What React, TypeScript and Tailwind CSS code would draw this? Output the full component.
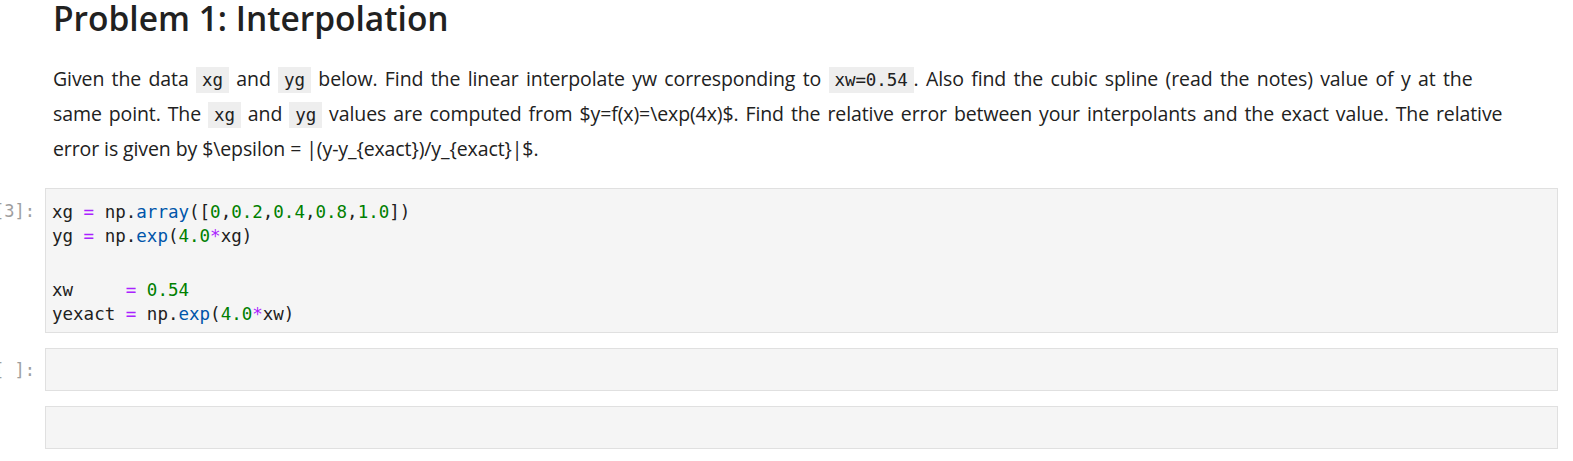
const mono = "font-['DejaVu_Sans_Mono',monospace]";

const Op = ({ children }: { children: React.ReactNode }) => (
  <span className="text-[#aa22ff]">{children}</span>
);
const Num = ({ children }: { children: React.ReactNode }) => (
  <span className="text-[#008000]">{children}</span>
);
const Fn = ({ children }: { children: React.ReactNode }) => (
  <span className="text-[#0055aa]">{children}</span>
);

const InlineCode = ({ children }: { children: React.ReactNode }) => (
  <code className={`${mono} bg-[#eeeeee] px-[6px] py-[3px] text-[17.5px] text-[#212121] [word-spacing:0]`}>{children}</code>
);

export default function App() {
  return (
    <div className="w-[1573px] h-[461px] bg-white overflow-hidden font-['Open_Sans','Noto_Sans',sans-serif] text-[#212121]">
      {/* Markdown cell */}
      <div className="pl-[53px]">
        <h2 className="text-[33.5px] font-semibold leading-[36px]">Problem 1: Interpolation</h2>
        <p className="mt-[26px] text-[19.5px] leading-[34px] tracking-[-0.1px] whitespace-nowrap">
          <span className="[word-spacing:2.4px]">
            Given the data <InlineCode>xg</InlineCode> and <InlineCode>yg</InlineCode> below. Find the linear interpolate yw corresponding to <InlineCode>xw=0.54</InlineCode>. Also find the cubic spline (read the notes) value of y at the
          </span>
          <br />
          <span className="[word-spacing:2px]">
            same point. The <InlineCode>xg</InlineCode> and <InlineCode>yg</InlineCode> values are computed from $y=f(x)=\exp(4x)$. Find the relative error between your interpolants and the exact value. The relative
          </span>
          <br />
          error is given by $\epsilon = |(y-y_{'{'}exact{'}'})/y_{'{'}exact{'}'}|$.
        </p>
      </div>

      {/* Code cell */}
      <div className="flex mt-[22px] pr-[15px]">
        <div className="pt-[11px] w-[45px] shrink-0 flex justify-end">
          <div className={`${mono} text-[17px] leading-[24px] text-[#9e9e9e] whitespace-nowrap pr-[10px]`}>[3]:</div>
        </div>
        <div className={`${mono} flex-1 h-[145px] bg-[#f5f5f5] border border-[#e0e0e0] pl-[6px] pt-[11px] text-[17.5px] leading-[24px] whitespace-pre`}>
          <div>xg <Op>=</Op> np.<Fn>array</Fn>([<Num>0</Num>,<Num>0.2</Num>,<Num>0.4</Num>,<Num>0.8</Num>,<Num>1.0</Num>])</div>
          <div>yg <Op>=</Op> np.<Fn>exp</Fn>(<Num>4.0</Num><Op>*</Op>xg)</div>
          <div className="h-[30px]"></div>
          <div>xw     <Op>=</Op> <Num>0.54</Num></div>
          <div>yexact <Op>=</Op> np.<Fn>exp</Fn>(<Num>4.0</Num><Op>*</Op>xw)</div>
        </div>
      </div>

      {/* Empty code cell */}
      <div className="flex mt-[15px] pr-[15px]">
        <div className="w-[45px] shrink-0 flex items-center justify-end">
          <div className={`${mono} text-[17px] leading-[24px] text-[#9e9e9e] whitespace-nowrap pr-[10px]`}>[ ]:</div>
        </div>
        <div className="flex-1 h-[43px] bg-[#f5f5f5] border border-[#e0e0e0]"></div>
      </div>

      {/* Raw cell */}
      <div className="flex mt-[15px] pr-[15px]">
        <div className="w-[45px] shrink-0"></div>
        <div className="flex-1 h-[43px] bg-[#f5f5f5] border border-[#e0e0e0]"></div>
      </div>
    </div>
  );
}
